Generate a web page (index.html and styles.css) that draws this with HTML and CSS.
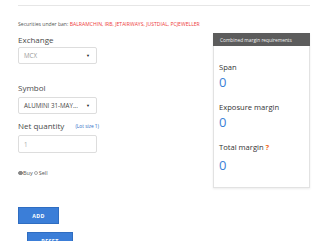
FILE: index.html
```html
<!DOCTYPE html>
<html>
<head>
<meta charset="utf-8">
<link rel="stylesheet" href="styles.css">
</head>
<body>
<div class="page">
  <div class="rule"></div>
  <p class="ban">Securities under ban: <span class="ban-list">BALRAMCHIN, IRB, JETAIRWAYS, JUSTDIAL, PCJEWELLER</span></p>
  <div class="row">
    <div class="form">
      <div class="label first">Exchange</div>
      <div class="select"><span class="val muted">MCX</span><span class="caret">&#9660;</span></div>
      <div class="label sym">Symbol</div>
      <div class="select"><span class="val">ALUMINI 31-MAY...</span><span class="caret">&#9660;</span></div>
      <div class="label qty">Net quantity <span class="lot">(Lot size 1)</span></div>
      <div class="input">1</div>
      <div class="radios">
        <span class="radio checked"></span><span class="rtext">Buy</span>
        <span class="radio"></span><span class="rtext">Sell</span>
      </div>
      <div class="btn add">ADD</div>
      <div class="btn reset">RESET</div>
    </div>
    <div class="panel">
      <div class="panel-head">Combined margin requirements</div>
      <div class="panel-body">
        <div class="plabel span">Span</div>
        <div class="pval">0</div>
        <div class="plabel exp">Exposure margin</div>
        <div class="pval">0</div>
        <div class="plabel tot">Total margin <span class="q">?</span></div>
        <div class="pval last">0</div>
      </div>
    </div>
  </div>
</div>
</body>
</html>
```

FILE: styles.css
```css
html, body {
  margin: 0;
  padding: 0;
  background: #fff;
  font-family: "Open Sans", "Liberation Sans", sans-serif;
  color: #333;
  overflow: hidden;
}
.page {
  padding: 5px 10px 0 18px;
  height: 241px;
  box-sizing: border-box;
}
.rule {
  height: 0;
  border-top: 1px solid #e6e6e6;
}
.ban {
  margin: 15px 0 0 0;
  font-size: 5.1px;
  line-height: 6px;
  color: #555;
}
.ban-list {
  color: #ee3b3b;
}
.row {
  display: flex;
  justify-content: space-between;
  align-items: flex-start;
}
.form {
  width: 120px;
  padding-top: 8px;
}
.label {
  font-size: 8px;
  line-height: 10px;
  color: #4a4a4a;
}
.label.sym { margin-top: 19px; }
.label.qty { margin-top: 7px; }
.lot {
  font-size: 4.8px;
  color: #2b6cc4;
  margin-left: 9px;
  vertical-align: 1px;
}
.select, .input {
  width: 79px;
  box-sizing: border-box;
  border: 1px solid #ddd;
  border-radius: 2px;
  display: flex;
  align-items: center;
  justify-content: space-between;
  padding: 0 6px 0 5px;
  font-size: 6.2px;
  color: #444;
}
.select {
  height: 17px;
  margin-top: 2px;
}
.label.sym + .select { margin-top: 4px; }
.val.muted { color: #999; }
.caret {
  font-size: 4px;
  color: #222;
}
.input {
  height: 18px;
  margin-top: 4px;
  color: #aaa;
  justify-content: flex-start;
}
.radios {
  margin-top: 17px;
  display: flex;
  align-items: center;
  height: 6px;
  font-size: 5.5px;
  color: #555;
}
.radio {
  width: 4.5px;
  height: 4.5px;
  border: 0.6px solid #aaa;
  border-radius: 50%;
  box-sizing: border-box;
  margin-right: 0.5px;
}
.radio.checked {
  background: #888;
  border-color: #888;
}
.rtext { margin-right: 1px; }
.btn {
  height: 17px;
  box-sizing: border-box;
  background: #3b7ed8;
  border: 1px solid #2f6dc1;
  color: #fff;
  font-weight: bold;
  font-size: 5.3px;
  letter-spacing: 0.4px;
  display: flex;
  align-items: center;
  justify-content: center;
}
.btn.add {
  width: 41px;
  margin-top: 31px;
}
.btn.reset {
  width: 46px;
  margin-top: 8px;
  margin-left: 9px;
}
.panel {
  width: 95px;
  margin-top: 6px;
  border: 1px solid #e2e2e2;
  border-top: none;
  box-shadow: 0 1px 2px rgba(0,0,0,0.08);
}
.panel-head {
  height: 13px;
  background: #5c5c5c;
  color: #f2f2f2;
  font-size: 4.8px;
  display: flex;
  align-items: center;
  padding-left: 7px;
  margin: 0 -1px;
}
.panel-body {
  padding: 16px 0 15px 5px;
}
.plabel {
  font-size: 7.6px;
  line-height: 10px;
  color: #333;
}
.plabel.exp { margin-top: 13px; }
.plabel.tot { margin-top: 13px; }
.q { color: #f26b1d; font-weight: bold; }
.pval {
  font-size: 13px;
  line-height: 14px;
  color: #3c7fd6;
  margin-top: 3px;
}
.pval.last { margin-top: 6px; }
```
